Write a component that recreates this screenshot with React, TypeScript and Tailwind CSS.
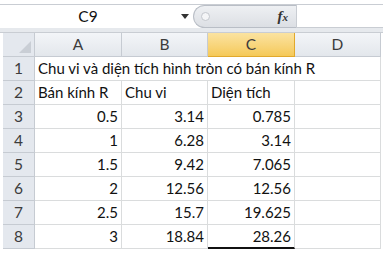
import React from 'react'

const cols = ['A', 'B', 'C', 'D']

// rows 3..8 of the sheet: radius, perimeter, area
const data = [
  ['0.5', '3.14', '0.785'],
  ['1', '6.28', '3.14'],
  ['1.5', '9.42', '7.065'],
  ['2', '12.56', '12.56'],
  ['2.5', '15.7', '19.625'],
  ['3', '18.84', '28.26'],
]

const font = { fontFamily: 'Lato, "Liberation Sans", sans-serif' }

const RowHead = ({ n }: { n: number }) => (
  <div className="w-[32px] h-[24px] flex items-center justify-center bg-[#e4e8ee] border-r border-b border-[#c6cbd2] text-[15.5px] text-[#3c3c3c]">
    {n}
  </div>
)

const Cell = ({ children, right, w }: { children?: React.ReactNode; right?: boolean; w: string }) => (
  <div
    className={`${w} h-[24px] flex items-center px-[3px] border-b border-r border-[#dadcdd] text-[15px] text-[#111] whitespace-nowrap ${
      right ? 'justify-end' : 'justify-start'
    }`}
  >
    {children}
  </div>
)

export default function App() {
  return (
    <div className="w-[386px] h-[256px] bg-white overflow-hidden" style={font}>
      {/* Formula bar */}
      <div className="mt-[4px] w-[383px] h-[24px] flex border-t border-[#c9cdd3]">
        <div className="w-[176px] flex items-center justify-center text-[15.5px] text-[#111]">C9</div>
        <div className="w-[17px] flex items-center justify-center">
          <svg width="8" height="5" viewBox="0 0 8 5">
            <path d="M0 0 L8 0 L4 5 Z" fill="#333" />
          </svg>
        </div>
        <div className="w-[103px] flex items-center rounded-l-full bg-gradient-to-b from-[#eef0f3] to-[#dcdfe4] border border-r-0 border-[#b9bec6]">
          <div className="ml-[7px] w-[9px] h-[9px] rounded-full bg-[#f4f5f7] border border-[#c3c7cd]" />
          <span className="ml-auto mr-[8px] text-[15px] italic font-bold text-[#333]" style={{ fontFamily: '"Liberation Serif", serif' }}>
            f<span className="text-[11px]">x</span>
          </span>
        </div>
        <div className="flex-1 border-l border-b border-[#c9cdd3] bg-white" />
      </div>
      <div className="w-[383px] h-[5px] bg-[#e6e9ed] border-b border-[#c9cdd3]" />

      {/* Sheet */}
      <div className="ml-[3px]">
        <div className="flex h-[24px]">
          <div className="w-[32px] h-[24px] relative bg-[#e4e8ee] border-r border-b border-[#c6cbd2]">
            <svg className="absolute right-[3px] bottom-[3px]" width="12" height="12" viewBox="0 0 12 12">
              <path d="M12 0 L12 12 L0 12 Z" fill="#c9ced5" />
            </svg>
          </div>
          {cols.map((c, i) => (
            <div
              key={c}
              className={`${i === 0 || i === 2 ? 'w-[87px]' : 'w-[86px]'} h-[24px] flex items-center justify-center border-r border-b text-[15.5px] ${
                c === 'C'
                  ? 'bg-gradient-to-b from-[#fbe3a0] to-[#f5c957] border-[#e1a92c] text-[#3c3c3c]'
                  : 'bg-gradient-to-b from-[#f3f5f8] to-[#e3e7ec] border-[#c6cbd2] text-[#3c3c3c]'
              }`}
            >
              {c}
            </div>
          ))}
        </div>

        {/* Row 1: title overflows across columns */}
        <div className="flex">
          <RowHead n={1} />
          <div className="w-[346px] h-[24px] flex items-center px-[3px] border-b border-r border-[#dadcdd] text-[15px] text-[#111] whitespace-nowrap">
            Chu vi và diện tích hình tròn có bán kính R
          </div>
        </div>

        <div className="flex">
          <RowHead n={2} />
          <Cell w="w-[87px]">Bán kính R</Cell>
          <Cell w="w-[86px]">Chu vi</Cell>
          <Cell w="w-[87px]">Diện tích</Cell>
          <Cell w="w-[86px]" />
        </div>

        {data.map((r, i) => {
          const isLast = i === data.length - 1
          return (
            <div className="flex" key={i}>
              <RowHead n={i + 3} />
              <Cell w="w-[87px]" right>{r[0]}</Cell>
              <Cell w="w-[86px]" right>{r[1]}</Cell>
              <div
                className={`w-[87px] h-[24px] flex items-center justify-end px-[3px] border-r border-[#dadcdd] text-[15px] text-[#111] ${
                  isLast ? 'border-b-2 border-b-[#111]' : 'border-b'
                }`}
              >
                {r[2]}
              </div>
              <Cell w="w-[86px]" />
            </div>
          )
        })}
      </div>
    </div>
  )
}
